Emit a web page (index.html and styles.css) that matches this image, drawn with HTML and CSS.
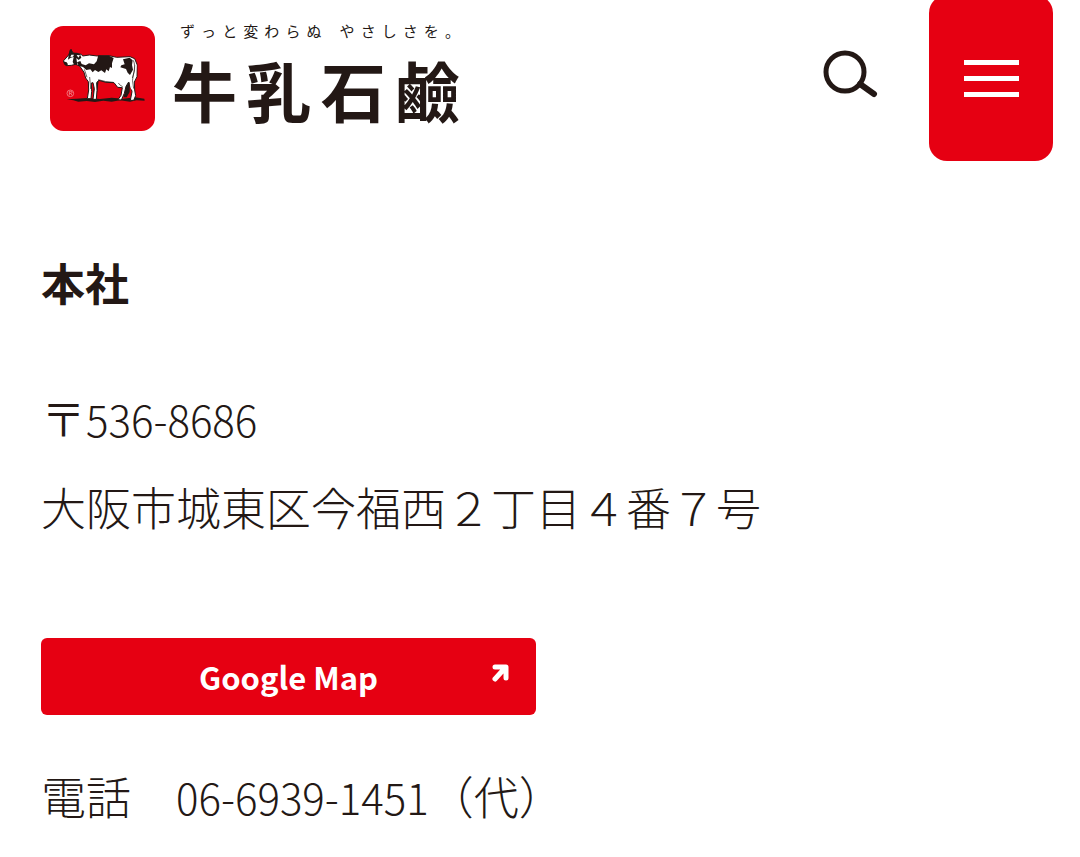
FILE: index.html
```html
<!DOCTYPE html>
<html lang="ja">
<head>
    <meta charset="UTF-8">
    <meta name="viewport" content="width=device-width, initial-scale=1.0">
    <title>本社 | 牛乳石鹼</title>
    <link rel="stylesheet" href="styles.css">
</head>
<body>
    <header class="header">
        <a class="logo" href="#">
            <svg class="logo-mark" viewBox="30 34 315 315" aria-hidden="true">
                <rect x="30" y="34" width="315" height="315" rx="40" fill="#e60012"/>
                <!-- ground -->
                <path d="M80 254 L110 252 L140 250 L180 253 L215 249 L250 252 L285 248 L313 252 L314 258 L290 257 L270 261 L240 257 L215 261 L190 258 L165 262 L140 259 L115 261 L100 257 Z" fill="#231815"/>
                <!-- far legs -->
                <path d="M162 190 L176 195 L173 222 L169 248 L160 248 Z M258 200 L270 195 L269 232 L260 248 L251 248 L256 224 Z" fill="#231815"/>
                <!-- body -->
                <path d="M70 139 L86 121 L93 105 L99 115 L124 119 L128 124 L148 121 L172 124 L207 123 L230 128 L270 126 L284 132 L291 149 L291 186 L283 202 L284 226 L287 243 L281 257 L271 257 L276 231 L270 208 L266 202 L258 215 L253 236 L244 256 L234 255 L243 242 L247 219 L233 218 L222 204 L198 203 L176 197 L170 204 L171 227 L169 254 L159 254 L163 222 L159 204 L154 205 L155 230 L153 252 L142 252 L146 226 L145 201 L137 190 L132 173 L119 154 L107 149 L94 152 L79 153 Z" fill="#fff" stroke="#231815" stroke-width="3" stroke-linejoin="round"/>
                <!-- patches -->
                <path d="M175 122 L207 123 L221 130 L216 146 L216 160 L210 157 L206 170 L199 164 L195 175 L184 167 L175 172 L165 166 L158 173 L151 164 L139 166 L129 157 L116 153 L111 143 L121 139 L125 148 L137 152 L147 146 L162 149 L170 140 Z" fill="#231815"/>
                <path d="M249 134 L269 129 L278 137 L276 151 L279 165 L270 181 L263 174 L258 163 L241 158 L244 152 L254 149 Z" fill="#231815"/>
                <path d="M86 121 L89 106 L94 103 L99 115 L111 114 L120 119 L124 129 L116 136 L109 130 L112 150 L103 151 L98 142 L101 127 L92 129 L84 135 Z M70 140 L80 143 L84 149 L79 154 L72 149 Z" fill="#231815"/>
                <path d="M94 120 L102 120 L99 126 L91 127 Z M110 121 L120 122 L115 129 Z M87 137 L95 135 L97 145 L91 149 Z" fill="#fff"/>
                <path d="M280 137 Q287 152 281 174 Q274 196 281 222 M286 151 Q285 171 277 190 M149 187 L152 223 M133 164 L141 188 M175 195 Q196 202 220 203 M235 205 Q240 213 248 216" fill="none" stroke="#231815" stroke-width="2"/>
                <path d="M274 185 Q268 210 276 224 M288 151 L286 188" fill="none" stroke="#fff" stroke-width="4"/>
                <!-- registered mark -->
                <circle cx="91" cy="236" r="10" fill="none" stroke="#f7a5a8" stroke-width="2"/>
                <path d="M88 242 V230 H92 Q96 230 96 233 Q96 236 92 236 H88 M92 236 L96 242" fill="none" stroke="#f7a5a8" stroke-width="2"/>
            </svg>
            <span class="logo-text">
                <span class="tagline">
                    <span>ず</span><span>っ</span><span>と</span><span>変</span><span>わ</span><span>ら</span><span class="phrase-end">ぬ</span><span>や</span><span>さ</span><span>し</span><span>さ</span><span>を</span><span>。</span>
                </span>
                <span class="brand"><span>牛</span><span>乳</span><span>石</span><span>鹼</span></span>
            </span>
        </a>
        <button class="search-btn" type="button" aria-label="検索">
            <svg viewBox="0 0 56 50" width="56" height="50" aria-hidden="true">
                <circle cx="22" cy="22" r="19" fill="none" stroke="#231815" stroke-width="5"/>
                <path d="M37 34 L51 44" fill="none" stroke="#231815" stroke-width="6" stroke-linecap="round"/>
            </svg>
        </button>
        <button class="menu-btn" type="button" aria-label="メニュー">
            <span class="bar"></span>
            <span class="bar"></span>
            <span class="bar"></span>
        </button>
    </header>

    <main class="office">
        <h1>本社</h1>
        <p class="address">
            〒<span class="num">536-8686</span><br>
            大阪市城東区今福西２丁目４番７号
        </p>
        <a class="map-btn" href="#">
            <span>Google Map</span>
            <svg class="arrow" viewBox="0 0 18 18" width="18" height="18" aria-hidden="true">
                <path d="M4 3 H15 V14 M14 4 L4 15" fill="none" stroke="#fff" stroke-width="5" stroke-linecap="round" stroke-linejoin="round"/>
            </svg>
        </a>
        <p class="tel">電話　<span class="num">06-6939-1451</span>（代）</p>
    </main>
</body>
</html>
```

FILE: styles.css
```css
* {
    box-sizing: border-box;
}
body {
    margin: 0;
    background-color: #fff;
    color: #231815;
    font-family: "Noto Sans CJK JP", sans-serif;
    font-size: 45px;
    font-weight: 300;
    line-height: 88px;
}
button {
    border: none;
    padding: 0;
    background: none;
    cursor: pointer;
}
.header {
    display: flex;
    align-items: flex-start;
    padding: 0 27px 0 50px;
}
.logo {
    display: flex;
    gap: 17px;
    margin-right: auto;
    padding-top: 20px;
    color: #231815;
    text-decoration: none;
}
.logo-mark {
    width: 105px;
    height: 105px;
    margin-top: 6px;
}
.logo-text {
    display: flex;
    flex-direction: column;
    width: 288px;
}
.tagline {
    display: flex;
    justify-content: space-between;
    padding-left: 8px;
    font-size: 15px;
    font-weight: 400;
    line-height: 22px;
}
.phrase-end {
    margin-right: 12px;
}
.brand {
    display: flex;
    justify-content: space-between;
    font-size: 65px;
    font-weight: 700;
    line-height: 94px;
}
.search-btn {
    height: 50px;
    margin: 50px 50px 0 0;
}
.search-btn svg {
    display: block;
}
.menu-btn {
    display: flex;
    flex-direction: column;
    align-items: center;
    justify-content: center;
    gap: 11px;
    width: 124px;
    height: 166px;
    margin-top: -5px;
    border-radius: 18px;
    background-color: #e60012;
}
.bar {
    width: 55px;
    height: 5px;
    background-color: #fff;
}
.office {
    padding: 77px 41px 0;
}
h1 {
    margin: 0 0 48px;
    font-size: 44px;
    font-weight: 700;
    line-height: 88px;
}
p {
    margin: 0;
}
.num {
    font-size: 42px;
}
.map-btn {
    display: grid;
    grid-template-columns: 1fr auto 1fr;
    width: 50%;
    max-width: 495px;
    height: 77px;
    margin: 87px 0 37px;
    padding: 0 27px;
    border-radius: 6px;
    background-color: #e60012;
    color: #fff;
    font-size: 31px;
    font-weight: 700;
    line-height: 78px;
    text-decoration: none;
}
.map-btn span {
    grid-column: 2;
}
.arrow {
    justify-self: end;
    margin-top: 26px;
}
```
